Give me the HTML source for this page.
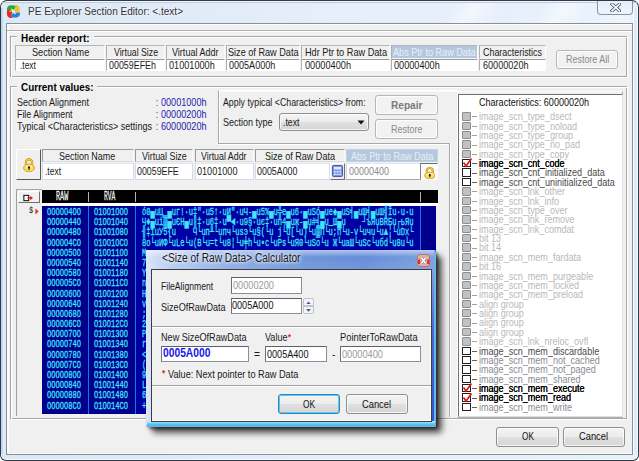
<!DOCTYPE html>
<html><head><meta charset="utf-8"><title>PE Explorer Section Editor</title>
<style>
html,body{margin:0;padding:0;background:#fff;overflow:hidden}
body{width:639px;height:461px;position:relative;font-family:"Liberation Sans",sans-serif}
div,span.t,svg{position:absolute;box-sizing:border-box}
span.t{white-space:pre;transform-origin:0 0;display:block}

.btn{border:1px solid #8e8f8f;border-radius:3px;background:linear-gradient(#f4f4f4 0%,#ececec 48%,#dfdfdf 52%,#d6d6d6 100%);box-shadow:inset 0 0 0 1px rgba(255,255,255,.75)}
.btnd{border:1px solid #b4b7ba;border-radius:3px;background:#f2f2f2;box-shadow:inset 0 0 0 1px rgba(255,255,255,.8)}
.hc{background:#f0f0f0;border-top:1px solid #b6b6b6;border-left:1px solid #b0b0b0;border-bottom:1px solid #f6f6f6;border-right:1px solid #fcfcfc}
.dc{background:#fff;border-top:1px solid #9a9a9a;border-left:1px solid #b0b0b0;border-bottom:1px solid #fff;border-right:1px solid #fff}
.hc2{background:#f0f0f0;border-top:1px solid #989898;border-left:1px solid #989898;border-right:1px solid #fafafa;border-bottom:1px solid #dcdcdc}
.dc2{background:#fff;border:1px solid #d3daec;border-top-color:#e2e6f0}
.fld{background:#fff;border:1px solid #8a8e96;border-top-color:#5c6068;border-left-color:#6c7078}

</style></head><body>
<div style="left:0px;top:0px;width:639px;height:461px;border-radius:7px 7px 6px 6px;background:#343a44"></div>
<div style="left:1px;top:1px;width:637px;height:459px;border-radius:6px 6px 5px 5px;background:#f2f8fd"></div>
<div style="left:2px;top:2px;width:635px;height:457px;border-radius:5px 5px 4px 4px;background:linear-gradient(to right,#dce8f5 0%,#e1eaf8 30%,#e6eefc 50%,#e8effc 78%,#e6f2fb 100%)"></div>
<div style="left:2px;top:2px;width:635px;height:1.2px;border-radius:5px 5px 0 0;background:#b9cce3"></div>
<div style="left:1px;top:8px;width:2.2px;height:446px;background:linear-gradient(to right,#bcd3ee,#cadef3)"></div>
<div style="left:3.2px;top:8px;width:2.8px;height:446px;background:#ddebfa"></div>
<div style="left:633px;top:8px;width:1px;height:446px;background:#fafdff"></div>
<div style="left:634px;top:8px;width:3px;height:446px;background:#dceafa"></div>
<div style="left:330px;top:3px;width:300px;height:20px;background:linear-gradient(125deg,rgba(255,255,255,0) 0%,rgba(255,255,255,0) 40%,rgba(255,255,255,.45) 47%,rgba(255,255,255,0) 56%,rgba(255,255,255,0) 68%,rgba(255,255,255,.5) 76%,rgba(255,255,255,.1) 84%,rgba(255,255,255,.35) 100%)"></div>
<svg style="left:6px;top:4px" width="15" height="15" viewBox="0 0 15 15">
<path d="M1 5 C1 1.5 4 0.5 7 1.5 L9.5 1.5 L9.5 4 L6 7 L3 6 L1 7 Z" fill="#2ea82e"/>
<path d="M9 1 C12 0.5 14.3 3 13.6 6 L13.5 9 L11 9.5 L8 6.5 L9.5 4 Z" fill="#ecc23a"/>
<path d="M14 8.5 C14.5 12 12 14 8.5 13.5 L5.5 13.5 L5 11 L8.5 8 L11 9 Z" fill="#2a7fd4"/>
<path d="M6 14 C3 14.5 0.5 12 1 9 L1 6.5 L3.5 5.5 L6.5 8.5 L5 11 Z" fill="#e02c1c"/>
<path d="M5.5 5 L9.5 10" stroke="#eaf2fb" stroke-width="1.3"/>
<circle cx="4.2" cy="7.2" r="0.8" fill="#f0d040"/>
</svg>
<span class="t" style="left:28.00px;top:5.81px;font-family:'Liberation Sans';font-size:10.5px;line-height:10.5px;font-weight:400;color:#343434;transform:scaleX(0.9553);text-shadow:0 0 3px #fff;">PE Explorer Section Editor: &lt;.text&gt;</span>
<div style="left:597px;top:1.2px;width:36px;height:13.6px;border:1px solid #8a96a6;border-top:none;border-radius:0 0 4px 4px;background:linear-gradient(#e6eef9,#eef4fc)"></div>
<svg style="left:609.5px;top:2.8px" width="11.5" height="9" viewBox="0 0 14 11"><path d="M2.5 1.5 L11.5 9.5 M11.5 1.5 L2.5 9.5" stroke="#4c5662" stroke-width="4" stroke-linecap="square"/><path d="M2.5 1.5 L11.5 9.5 M11.5 1.5 L2.5 9.5" stroke="#fafcff" stroke-width="2" stroke-linecap="square"/></svg>
<div style="left:6px;top:23px;width:627px;height:432px;background:#f0f0f0;border:1px solid #889096"></div>
<div style="left:7px;top:24px;width:625px;height:1px;background:#fdfdfd"></div>
<div style="left:7px;top:24px;width:2px;height:429px;background:#fdfdfd"></div>
<div style="left:7px;top:452.5px;width:625px;height:1px;background:#f8f8f8"></div>
<div style="left:7px;top:30px;width:625px;height:1px;background:#b0b0b0"></div>
<div style="left:7px;top:31px;width:625px;height:1px;background:#fff"></div>
<div style="left:10px;top:36px;width:617px;height:41px;border:1px solid #a8a8a8"></div>
<div style="left:11px;top:37px;width:617px;height:41px;border:1px solid #fff;border-right-color:#fff;"></div>
<div style="left:10px;top:36px;width:617px;height:41px;border:1px solid #a8a8a8;border-right:none;border-bottom:none;background:none"></div>
<div style="left:17px;top:32px;width:77px;height:10px;background:#f0f0f0"></div>
<span class="t" style="left:20.50px;top:32.59px;font-family:'Liberation Sans';font-size:11px;line-height:11px;font-weight:700;color:#000;transform:scaleX(0.9037);">Header report:</span>
<div class="hc" style="left:15px;top:45px;width:90px;height:14px;"></div>
<div class="dc" style="left:15px;top:59px;width:90px;height:12px"></div>
<span class="t" style="left:31.60px;top:46.99px;font-family:'Liberation Sans';font-size:11px;line-height:11px;font-weight:400;color:#1a1a1a;transform:scaleX(0.8293);">Section Name</span>
<span class="t" style="left:19.70px;top:60.19px;font-family:'Liberation Sans';font-size:11px;line-height:11px;font-weight:400;color:#1a1a1a;transform:scaleX(0.7597);">.text</span>
<div class="hc" style="left:106px;top:45px;width:58.5px;height:14px;"></div>
<div class="dc" style="left:106px;top:59px;width:58.5px;height:12px"></div>
<span class="t" style="left:113.50px;top:46.99px;font-family:'Liberation Sans';font-size:11px;line-height:11px;font-weight:400;color:#1a1a1a;transform:scaleX(0.7937);">Virtual Size</span>
<span class="t" style="left:109.25px;top:60.19px;font-family:'Liberation Sans';font-size:11px;line-height:11px;font-weight:400;color:#1a1a1a;transform:scaleX(0.8088);">00059EFEh</span>
<div class="hc" style="left:165.5px;top:45px;width:59.0px;height:14px;"></div>
<div class="dc" style="left:165.5px;top:59px;width:59.0px;height:12px"></div>
<span class="t" style="left:171.50px;top:46.99px;font-family:'Liberation Sans';font-size:11px;line-height:11px;font-weight:400;color:#1a1a1a;transform:scaleX(0.8205);">Virtual Addr</span>
<span class="t" style="left:168.75px;top:60.19px;font-family:'Liberation Sans';font-size:11px;line-height:11px;font-weight:400;color:#1a1a1a;transform:scaleX(0.8309);">01001000h</span>
<div class="hc" style="left:225.5px;top:45px;width:74.5px;height:14px;"></div>
<div class="dc" style="left:225.5px;top:59px;width:74.5px;height:12px"></div>
<span class="t" style="left:227.50px;top:46.99px;font-family:'Liberation Sans';font-size:11px;line-height:11px;font-weight:400;color:#1a1a1a;transform:scaleX(0.8296);">Size of Raw Data</span>
<span class="t" style="left:228.75px;top:60.19px;font-family:'Liberation Sans';font-size:11px;line-height:11px;font-weight:400;color:#1a1a1a;transform:scaleX(0.8218);">0005A000h</span>
<div class="hc" style="left:301px;top:45px;width:88.5px;height:14px;"></div>
<div class="dc" style="left:301px;top:59px;width:88.5px;height:12px"></div>
<span class="t" style="left:305.00px;top:46.99px;font-family:'Liberation Sans';font-size:11px;line-height:11px;font-weight:400;color:#1a1a1a;transform:scaleX(0.8331);">Hdr Ptr to Raw Data</span>
<span class="t" style="left:304.50px;top:60.19px;font-family:'Liberation Sans';font-size:11px;line-height:11px;font-weight:400;color:#1a1a1a;transform:scaleX(0.8354);">00000400h</span>
<div class="hc" style="left:390.5px;top:45px;width:87.5px;height:14px;background:#b5c7de;"></div>
<div class="dc" style="left:390.5px;top:59px;width:87.5px;height:12px"></div>
<span class="t" style="left:392.50px;top:46.99px;font-family:'Liberation Sans';font-size:11px;line-height:11px;font-weight:400;color:#e9eef6;transform:scaleX(0.8278);">Abs Ptr to Raw Data</span>
<span class="t" style="left:393.75px;top:60.19px;font-family:'Liberation Sans';font-size:11px;line-height:11px;font-weight:400;color:#1a1a1a;transform:scaleX(0.8309);">00000400h</span>
<div class="hc" style="left:479px;top:45px;width:67px;height:14px;"></div>
<div class="dc" style="left:479px;top:59px;width:67px;height:12px"></div>
<span class="t" style="left:483.00px;top:46.99px;font-family:'Liberation Sans';font-size:11px;line-height:11px;font-weight:400;color:#1a1a1a;transform:scaleX(0.8110);">Characteristics</span>
<span class="t" style="left:482.50px;top:60.19px;font-family:'Liberation Sans';font-size:11px;line-height:11px;font-weight:400;color:#1a1a1a;transform:scaleX(0.8263);">60000020h</span>
<div class="btnd" style="left:556px;top:49.5px;width:62px;height:19.5px"></div>
<span class="t" style="left:566.25px;top:54.29px;font-family:'Liberation Sans';font-size:11px;line-height:11px;font-weight:400;color:#8a8a8a;transform:scaleX(0.8129);">Restore All</span>
<div style="left:10px;top:86px;width:617px;height:333px;border:1px solid #a8a8a8"></div>
<div style="left:11px;top:87px;width:617px;height:333px;border:1px solid #fff;border-right-color:#fff;"></div>
<div style="left:10px;top:86px;width:617px;height:333px;border:1px solid #a8a8a8;border-right:none;border-bottom:none;background:none"></div>
<div style="left:17px;top:82px;width:80px;height:10px;background:#f0f0f0"></div>
<span class="t" style="left:20.50px;top:81.69px;font-family:'Liberation Sans';font-size:11px;line-height:11px;font-weight:700;color:#000;transform:scaleX(0.8984);">Current values:</span>
<span class="t" style="left:17.00px;top:96.69px;font-family:'Liberation Sans';font-size:11px;line-height:11px;font-weight:400;color:#1a1a1a;transform:scaleX(0.8176);">Section Alignment</span>
<span class="t" style="left:17.00px;top:108.99px;font-family:'Liberation Sans';font-size:11px;line-height:11px;font-weight:400;color:#1a1a1a;transform:scaleX(0.8033);">File Alignment</span>
<span class="t" style="left:17.00px;top:120.59px;font-family:'Liberation Sans';font-size:11px;line-height:11px;font-weight:400;color:#1a1a1a;transform:scaleX(0.8239);">Typical &lt;Characteristics&gt; settings</span>
<span class="t" style="left:155.50px;top:96.69px;font-family:'Liberation Sans';font-size:11px;line-height:11px;font-weight:400;color:#1a1a1a;transform:scaleX(0.6531);">:</span>
<span class="t" style="left:161.00px;top:96.69px;font-family:'Liberation Sans';font-size:11px;line-height:11px;font-weight:400;color:#1c1ca8;transform:scaleX(0.8263);">00001000h</span>
<span class="t" style="left:155.50px;top:108.99px;font-family:'Liberation Sans';font-size:11px;line-height:11px;font-weight:400;color:#1a1a1a;transform:scaleX(0.6531);">:</span>
<span class="t" style="left:161.00px;top:108.99px;font-family:'Liberation Sans';font-size:11px;line-height:11px;font-weight:400;color:#1c1ca8;transform:scaleX(0.8263);">00000200h</span>
<span class="t" style="left:155.50px;top:120.59px;font-family:'Liberation Sans';font-size:11px;line-height:11px;font-weight:400;color:#1a1a1a;transform:scaleX(0.6531);">:</span>
<span class="t" style="left:161.00px;top:120.59px;font-family:'Liberation Sans';font-size:11px;line-height:11px;font-weight:400;color:#1c1ca8;transform:scaleX(0.8263);">60000020h</span>
<div style="left:218px;top:90px;width:240px;height:54px;border-top:1px solid #fff;border-left:1px solid #a8a8a8"></div>
<div style="left:219px;top:91px;width:239px;height:53px;border-top:1px solid #f8f8f8;border-left:1px solid #fff"></div>
<div style="left:218px;top:143px;width:232px;height:1px;background:#a8a8a8"></div>
<div style="left:218px;top:144px;width:232px;height:1px;background:#fff"></div>
<div style="left:449px;top:143px;width:1px;height:274px;background:#a8a8a8"></div>
<div style="left:450px;top:143px;width:1px;height:274px;background:#fff"></div>
<span class="t" style="left:223.40px;top:96.59px;font-family:'Liberation Sans';font-size:11px;line-height:11px;font-weight:400;color:#1a1a1a;transform:scaleX(0.7988);">Apply typical &lt;Characteristics&gt; from:</span>
<span class="t" style="left:223.40px;top:116.59px;font-family:'Liberation Sans';font-size:11px;line-height:11px;font-weight:400;color:#1a1a1a;transform:scaleX(0.8192);">Section type</span>
<div class="btn" style="left:279px;top:113px;width:90px;height:18px"></div>
<span class="t" style="left:283.00px;top:116.59px;font-family:'Liberation Sans';font-size:11px;line-height:11px;font-weight:400;color:#1a1a1a;transform:scaleX(0.7934);">.text</span>
<svg style="left:357px;top:120px" width="8" height="5" viewBox="0 0 8 5"><path d="M0.5 0.5 L7.5 0.5 L4 4.5 Z" fill="#111"/></svg>
<div class="btnd" style="left:375px;top:95px;width:63px;height:20px"></div>
<span class="t" style="left:390.50px;top:100.19px;font-family:'Liberation Sans';font-size:11px;line-height:11px;font-weight:700;color:#7c7c7c;transform:scaleX(0.9197);">Repair</span>
<div class="btnd" style="left:375px;top:119px;width:63px;height:20px"></div>
<span class="t" style="left:391.00px;top:123.69px;font-family:'Liberation Sans';font-size:11px;line-height:11px;font-weight:400;color:#8a8a8a;transform:scaleX(0.8175);">Restore</span>
<div style="left:16px;top:149.3px;width:25px;height:30.7px;background:#f0f0f0;border:1px solid #fff;border-right:1.4px solid #585858;border-bottom:1.4px solid #585858"></div>
<svg style="left:22.5px;top:158px" width="12" height="14" viewBox="0 0 12 14">
<path d="M3 7 V4.2 a3 3 0 0 1 6 0 V7" fill="none" stroke="#d89a18" stroke-width="2.4"/>
<path d="M3 7 V4.2 a3 3 0 0 1 6 0 V7" fill="none" stroke="#f4cf58" stroke-width="1"/>
<ellipse cx="6" cy="10" rx="5.4" ry="3.9" fill="#f6dc62" stroke="#d8a218" stroke-width="1"/>
<ellipse cx="6" cy="8.6" rx="3.6" ry="1.3" fill="#fdf0a8"/>
<circle cx="6" cy="9.3" r="1.1" fill="#1a1400"/><rect x="5.5" y="9.3" width="1" height="2.8" fill="#1a1400"/>
</svg>
<div class="hc2" style="left:41.5px;top:149.3px;width:92.0px;height:13.2px;"></div>
<div class="dc2" style="left:41.5px;top:162.5px;width:92.0px;height:17.5px"></div>
<span class="t" style="left:59.25px;top:150.99px;font-family:'Liberation Sans';font-size:11px;line-height:11px;font-weight:400;color:#1a1a1a;transform:scaleX(0.8141);">Section Name</span>
<span class="t" style="left:44.50px;top:165.69px;font-family:'Liberation Sans';font-size:11px;line-height:11px;font-weight:400;color:#1a1a1a;transform:scaleX(0.7693);">.text</span>
<div class="hc2" style="left:134.5px;top:149.3px;width:58.5px;height:13.2px;"></div>
<div class="dc2" style="left:134.5px;top:162.5px;width:58.5px;height:17.5px"></div>
<span class="t" style="left:141.50px;top:150.99px;font-family:'Liberation Sans';font-size:11px;line-height:11px;font-weight:400;color:#1a1a1a;transform:scaleX(0.8072);">Virtual Size</span>
<span class="t" style="left:137.00px;top:165.69px;font-family:'Liberation Sans';font-size:11px;line-height:11px;font-weight:400;color:#1a1a1a;transform:scaleX(0.8031);">00059EFE</span>
<div class="hc2" style="left:194.5px;top:149.3px;width:59.0px;height:13.2px;"></div>
<div class="dc2" style="left:194.5px;top:162.5px;width:59.0px;height:17.5px"></div>
<span class="t" style="left:201.25px;top:150.99px;font-family:'Liberation Sans';font-size:11px;line-height:11px;font-weight:400;color:#1a1a1a;transform:scaleX(0.8029);">Virtual Addr</span>
<span class="t" style="left:197.00px;top:165.69px;font-family:'Liberation Sans';font-size:11px;line-height:11px;font-weight:400;color:#1a1a1a;transform:scaleX(0.8273);">01001000</span>
<div class="hc2" style="left:254.5px;top:149.3px;width:90.5px;height:13.2px;"></div>
<div class="dc2" style="left:254.5px;top:162.5px;width:75.0px;height:17.5px"></div>
<span class="t" style="left:264.50px;top:150.99px;font-family:'Liberation Sans';font-size:11px;line-height:11px;font-weight:400;color:#1a1a1a;transform:scaleX(0.8237);">Size of Raw Data</span>
<span class="t" style="left:257.00px;top:165.69px;font-family:'Liberation Sans';font-size:11px;line-height:11px;font-weight:400;color:#1a1a1a;transform:scaleX(0.8072);">0005A000</span>
<div class="hc2" style="left:346px;top:149.3px;width:91.5px;height:13.2px;background:#b5c7de;border-color:#c4d2e6;"></div>
<div class="dc2" style="left:346px;top:162.5px;width:74.5px;height:17.5px"></div>
<span class="t" style="left:350.75px;top:150.99px;font-family:'Liberation Sans';font-size:11px;line-height:11px;font-weight:400;color:#e9eef6;transform:scaleX(0.8253);">Abs Ptr to Raw Data</span>
<span class="t" style="left:348.75px;top:165.69px;font-family:'Liberation Sans';font-size:11px;line-height:11px;font-weight:400;color:#8c8c8c;transform:scaleX(0.8171);">00000400</span>
<div style="left:329.5px;top:163px;width:15.5px;height:16.5px;background:#ececec;border:1px solid #fff;border-right-color:#707070;border-bottom-color:#707070"></div>
<svg style="left:332px;top:165px" width="11" height="12" viewBox="0 0 11 12"><rect x="0.5" y="0.5" width="10" height="11" rx="1" fill="#7e96e4" stroke="#4a5cb0"/><rect x="2" y="2" width="7" height="2.5" fill="#dfe8ff"/><g fill="#e8eeff"><rect x="2" y="6" width="1.6" height="1.4"/><rect x="4.7" y="6" width="1.6" height="1.4"/><rect x="7.4" y="6" width="1.6" height="1.4"/><rect x="2" y="8.6" width="1.6" height="1.4"/><rect x="4.7" y="8.6" width="1.6" height="1.4"/><rect x="7.4" y="8.6" width="1.6" height="1.4"/></g></svg>
<div style="left:420px;top:163px;width:17.5px;height:17px;background:#fbfbfb;border:1px solid #fbfbfb;border-top:1.3px solid #707070;border-left:1.3px solid #808080"></div>
<svg style="left:423.8px;top:166.6px" width="11.6" height="12" preserveAspectRatio="none" viewBox="0 0 12 14">
<path d="M3 7 V4.2 a3 3 0 0 1 6 0 V7" fill="none" stroke="#d89a18" stroke-width="2.4"/>
<path d="M3 7 V4.2 a3 3 0 0 1 6 0 V7" fill="none" stroke="#f4cf58" stroke-width="1"/>
<ellipse cx="6" cy="10" rx="5.4" ry="3.9" fill="#f6dc62" stroke="#d8a218" stroke-width="1"/>
<ellipse cx="6" cy="8.6" rx="3.6" ry="1.3" fill="#fdf0a8"/>
<circle cx="6" cy="9.3" r="1.1" fill="#1a1400"/><rect x="5.5" y="9.3" width="1" height="2.8" fill="#1a1400"/>
</svg>
<div style="left:346px;top:178.8px;width:75px;height:1px;background:#a8a8a8"></div>
<div style="left:16px;top:190px;width:1px;height:226px;background:#a0a0a0"></div>
<div style="left:16px;top:189.3px;width:26px;height:1px;background:#a8a8a8"></div>
<div style="left:18px;top:190.8px;width:21.6px;height:12.6px;background:#f0f0f0;border:1px solid #fff;border-right:1.3px solid #707070;border-bottom:1.3px solid #707070"></div>
<svg style="left:23.3px;top:193.8px" width="10.5" height="8" viewBox="0 0 12 9"><rect x="1" y="1.5" width="5.5" height="6" fill="#fff" stroke="#111" stroke-width="1.2"/><path d="M5 4.5 H10" stroke="#e02010" stroke-width="1.6"/><path d="M8.2 2 L11.5 4.5 L8.2 7 Z" fill="#e02010"/></svg>
<div style="left:41.5px;top:189.5px;width:396.5px;height:14px;background:#000"></div>
<div style="left:41.5px;top:203.3px;width:396.5px;height:2.8px;background:#fff"></div>
<div style="left:42.3px;top:206px;width:394.2px;height:208.2px;background:#00008c"></div>
<div style="left:136px;top:206px;width:284px;height:208.2px;background:#0000a2"></div>
<div style="left:87.5px;top:192px;width:1.4px;height:10px;background:#b0b0b0"></div>
<div style="left:87.5px;top:206px;width:1.3px;height:208px;background:#1878d8"></div>
<div style="left:134.5px;top:192px;width:1.4px;height:10px;background:#b0b0b0"></div>
<div style="left:134.5px;top:206px;width:1.3px;height:208px;background:#1878d8"></div>
<div style="left:419.5px;top:192px;width:1.4px;height:10px;background:#b0b0b0"></div>
<div style="left:419.5px;top:206px;width:1.3px;height:208px;background:#1878d8"></div>
<span class="t" style="left:56.00px;top:191.14px;font-family:'Liberation Mono';font-size:12px;line-height:12px;font-weight:400;color:#f4f4f4;transform:scaleX(0.5646);-webkit-text-stroke:.3px #f4f4f4;">RAW</span>
<span class="t" style="left:103.60px;top:191.14px;font-family:'Liberation Mono';font-size:12px;line-height:12px;font-weight:400;color:#f4f4f4;transform:scaleX(0.5275);-webkit-text-stroke:.3px #f4f4f4;">RVA</span>
<span class="t" style="left:28.80px;top:206.58px;font-family:'Liberation Mono';font-size:9px;line-height:9px;font-weight:400;color:#202020;transform:scaleX(0.7769);">$</span>
<svg style="left:34.8px;top:208px" width="4.2" height="7" viewBox="0 0 5 9"><path d="M0.3 0.5 L4.5 4.5 L0.3 8.5 Z" fill="#e03010"/></svg>
<span class="t" style="left:47.40px;top:206.07px;font-family:'Liberation Mono';font-size:11.5px;line-height:11.5px;font-weight:400;color:#40e6ff;transform:scaleX(0.6139);-webkit-text-stroke:.3px #40e6ff;">OOOOO4OO</span>
<span class="t" style="left:93.70px;top:206.07px;font-family:'Liberation Mono';font-size:11.5px;line-height:11.5px;font-weight:400;color:#40e6ff;transform:scaleX(0.6139);-webkit-text-stroke:.3px #40e6ff;">O1OO1OOO</span>
<span class="t" style="left:142.00px;top:206.07px;font-family:'Liberation Mono';font-size:11.5px;line-height:11.5px;font-weight:400;color:#40e6ff;transform:scaleX(0.6147);-webkit-text-stroke:.3px #40e6ff;">ó0▄uЦ ▄uг!·u‡&quot;·u5↑·uИ&quot;·uЧ-▄u5%▄u╬e▄u6·▄uSó▄ue♠▄uS╡▄uШ╡▄uШ╣Їu·u·u</span>
<span class="t" style="left:47.40px;top:216.25px;font-family:'Liberation Mono';font-size:11.5px;line-height:11.5px;font-weight:400;color:#40e6ff;transform:scaleX(0.6139);-webkit-text-stroke:.3px #40e6ff;">OOOOO44O</span>
<span class="t" style="left:93.70px;top:216.25px;font-family:'Liberation Mono';font-size:11.5px;line-height:11.5px;font-weight:400;color:#40e6ff;transform:scaleX(0.6139);-webkit-text-stroke:.3px #40e6ff;">O1OO1O4O</span>
<span class="t" style="left:142.00px;top:216.25px;font-family:'Liberation Mono';font-size:11.5px;line-height:11.5px;font-weight:400;color:#40e6ff;transform:scaleX(0.6147);-webkit-text-stroke:.3px #40e6ff;">Ч♦▄ui▒▄uЄH▄u║‡·u6‡·u▀◄·u9§·uє‡·uп4▄uж-▄u#╡▄u_Ш▄u    ┘ъЯuBRБu┌ьЯu</span>
<span class="t" style="left:47.40px;top:226.44px;font-family:'Liberation Mono';font-size:11.5px;line-height:11.5px;font-weight:400;color:#40e6ff;transform:scaleX(0.6139);-webkit-text-stroke:.3px #40e6ff;">OOOOO48O</span>
<span class="t" style="left:93.70px;top:226.44px;font-family:'Liberation Mono';font-size:11.5px;line-height:11.5px;font-weight:400;color:#40e6ff;transform:scaleX(0.6139);-webkit-text-stroke:.3px #40e6ff;">O1OO1O8O</span>
<span class="t" style="left:142.00px;top:226.44px;font-family:'Liberation Mono';font-size:11.5px;line-height:11.5px;font-weight:400;color:#40e6ff;transform:scaleX(0.6146);-webkit-text-stroke:.3px #40e6ff;">╢‡їuУ5{u    Ч└uп╨└uпч└usэ└u§(└u j└u[└u)└u▒П└u;п└u-v└uчu└u▲╎└uDx└</span>
<span class="t" style="left:47.40px;top:236.62px;font-family:'Liberation Mono';font-size:11.5px;line-height:11.5px;font-weight:400;color:#40e6ff;transform:scaleX(0.6139);-webkit-text-stroke:.3px #40e6ff;">OOOOO4CO</span>
<span class="t" style="left:93.70px;top:236.62px;font-family:'Liberation Mono';font-size:11.5px;line-height:11.5px;font-weight:400;color:#40e6ff;transform:scaleX(0.6139);-webkit-text-stroke:.3px #40e6ff;">O1OO1OCO</span>
<span class="t" style="left:142.00px;top:236.62px;font-family:'Liberation Mono';font-size:11.5px;line-height:11.5px;font-weight:400;color:#40e6ff;transform:scaleX(0.6147);-webkit-text-stroke:.3px #40e6ff;">8o└uИФ└uLe└u(В└u=t└u8¦└u╪h└u▪с└uРs└uЯ0└uSo└u Ж└uаШ└uSc└uбd└u8u└u</span>
<span class="t" style="left:47.40px;top:246.81px;font-family:'Liberation Mono';font-size:11.5px;line-height:11.5px;font-weight:400;color:#40e6ff;transform:scaleX(0.6139);-webkit-text-stroke:.3px #40e6ff;">OOOOO5OO</span>
<span class="t" style="left:93.70px;top:246.81px;font-family:'Liberation Mono';font-size:11.5px;line-height:11.5px;font-weight:400;color:#40e6ff;transform:scaleX(0.6139);-webkit-text-stroke:.3px #40e6ff;">O1OO11OO</span>
<span class="t" style="left:142.00px;top:246.81px;font-family:'Liberation Mono';font-size:11.5px;line-height:11.5px;font-weight:400;color:#40e6ff;transform:scaleX(0.6147);-webkit-text-stroke:.3px #40e6ff;">M                                                               </span>
<span class="t" style="left:47.40px;top:256.99px;font-family:'Liberation Mono';font-size:11.5px;line-height:11.5px;font-weight:400;color:#40e6ff;transform:scaleX(0.6139);-webkit-text-stroke:.3px #40e6ff;">OOOOO54O</span>
<span class="t" style="left:93.70px;top:256.99px;font-family:'Liberation Mono';font-size:11.5px;line-height:11.5px;font-weight:400;color:#40e6ff;transform:scaleX(0.6139);-webkit-text-stroke:.3px #40e6ff;">O1OO114O</span>
<span class="t" style="left:142.00px;top:256.99px;font-family:'Liberation Mono';font-size:11.5px;line-height:11.5px;font-weight:400;color:#40e6ff;transform:scaleX(0.6147);-webkit-text-stroke:.3px #40e6ff;">7                                                               </span>
<span class="t" style="left:47.40px;top:267.18px;font-family:'Liberation Mono';font-size:11.5px;line-height:11.5px;font-weight:400;color:#40e6ff;transform:scaleX(0.6139);-webkit-text-stroke:.3px #40e6ff;">OOOOO58O</span>
<span class="t" style="left:93.70px;top:267.18px;font-family:'Liberation Mono';font-size:11.5px;line-height:11.5px;font-weight:400;color:#40e6ff;transform:scaleX(0.6139);-webkit-text-stroke:.3px #40e6ff;">O1OO118O</span>
<span class="t" style="left:142.00px;top:267.18px;font-family:'Liberation Mono';font-size:11.5px;line-height:11.5px;font-weight:400;color:#40e6ff;transform:scaleX(0.6147);-webkit-text-stroke:.3px #40e6ff;">Y                                                               </span>
<span class="t" style="left:47.40px;top:277.36px;font-family:'Liberation Mono';font-size:11.5px;line-height:11.5px;font-weight:400;color:#40e6ff;transform:scaleX(0.6139);-webkit-text-stroke:.3px #40e6ff;">OOOOO5CO</span>
<span class="t" style="left:93.70px;top:277.36px;font-family:'Liberation Mono';font-size:11.5px;line-height:11.5px;font-weight:400;color:#40e6ff;transform:scaleX(0.6139);-webkit-text-stroke:.3px #40e6ff;">O1OO11CO</span>
<span class="t" style="left:142.00px;top:277.36px;font-family:'Liberation Mono';font-size:11.5px;line-height:11.5px;font-weight:400;color:#40e6ff;transform:scaleX(0.6147);-webkit-text-stroke:.3px #40e6ff;">n                                                               </span>
<span class="t" style="left:47.40px;top:287.55px;font-family:'Liberation Mono';font-size:11.5px;line-height:11.5px;font-weight:400;color:#40e6ff;transform:scaleX(0.6139);-webkit-text-stroke:.3px #40e6ff;">OOOOO6OO</span>
<span class="t" style="left:93.70px;top:287.55px;font-family:'Liberation Mono';font-size:11.5px;line-height:11.5px;font-weight:400;color:#40e6ff;transform:scaleX(0.6139);-webkit-text-stroke:.3px #40e6ff;">O1OO12OO</span>
<span class="t" style="left:142.00px;top:287.55px;font-family:'Liberation Mono';font-size:11.5px;line-height:11.5px;font-weight:400;color:#40e6ff;transform:scaleX(0.6147);-webkit-text-stroke:.3px #40e6ff;">H                                                               </span>
<span class="t" style="left:47.40px;top:297.73px;font-family:'Liberation Mono';font-size:11.5px;line-height:11.5px;font-weight:400;color:#40e6ff;transform:scaleX(0.6139);-webkit-text-stroke:.3px #40e6ff;">OOOOO64O</span>
<span class="t" style="left:93.70px;top:297.73px;font-family:'Liberation Mono';font-size:11.5px;line-height:11.5px;font-weight:400;color:#40e6ff;transform:scaleX(0.6139);-webkit-text-stroke:.3px #40e6ff;">O1OO124O</span>
<span class="t" style="left:142.00px;top:297.73px;font-family:'Liberation Mono';font-size:11.5px;line-height:11.5px;font-weight:400;color:#40e6ff;transform:scaleX(0.6147);-webkit-text-stroke:.3px #40e6ff;">v                                                               </span>
<span class="t" style="left:47.40px;top:307.92px;font-family:'Liberation Mono';font-size:11.5px;line-height:11.5px;font-weight:400;color:#40e6ff;transform:scaleX(0.6139);-webkit-text-stroke:.3px #40e6ff;">OOOOO68O</span>
<span class="t" style="left:93.70px;top:307.92px;font-family:'Liberation Mono';font-size:11.5px;line-height:11.5px;font-weight:400;color:#40e6ff;transform:scaleX(0.6139);-webkit-text-stroke:.3px #40e6ff;">O1OO128O</span>
<span class="t" style="left:142.00px;top:307.92px;font-family:'Liberation Mono';font-size:11.5px;line-height:11.5px;font-weight:400;color:#40e6ff;transform:scaleX(0.6147);-webkit-text-stroke:.3px #40e6ff;">;                                                               </span>
<span class="t" style="left:47.40px;top:318.10px;font-family:'Liberation Mono';font-size:11.5px;line-height:11.5px;font-weight:400;color:#40e6ff;transform:scaleX(0.6139);-webkit-text-stroke:.3px #40e6ff;">OOOOO6CO</span>
<span class="t" style="left:93.70px;top:318.10px;font-family:'Liberation Mono';font-size:11.5px;line-height:11.5px;font-weight:400;color:#40e6ff;transform:scaleX(0.6139);-webkit-text-stroke:.3px #40e6ff;">O1OO12CO</span>
<span class="t" style="left:142.00px;top:318.10px;font-family:'Liberation Mono';font-size:11.5px;line-height:11.5px;font-weight:400;color:#40e6ff;transform:scaleX(0.6147);-webkit-text-stroke:.3px #40e6ff;">2                                                               </span>
<span class="t" style="left:47.40px;top:328.29px;font-family:'Liberation Mono';font-size:11.5px;line-height:11.5px;font-weight:400;color:#40e6ff;transform:scaleX(0.6139);-webkit-text-stroke:.3px #40e6ff;">OOOOO7OO</span>
<span class="t" style="left:93.70px;top:328.29px;font-family:'Liberation Mono';font-size:11.5px;line-height:11.5px;font-weight:400;color:#40e6ff;transform:scaleX(0.6139);-webkit-text-stroke:.3px #40e6ff;">O1OO13OO</span>
<span class="t" style="left:142.00px;top:328.29px;font-family:'Liberation Mono';font-size:11.5px;line-height:11.5px;font-weight:400;color:#40e6ff;transform:scaleX(0.6147);-webkit-text-stroke:.3px #40e6ff;">P                                                               </span>
<span class="t" style="left:47.40px;top:338.47px;font-family:'Liberation Mono';font-size:11.5px;line-height:11.5px;font-weight:400;color:#40e6ff;transform:scaleX(0.6139);-webkit-text-stroke:.3px #40e6ff;">OOOOO74O</span>
<span class="t" style="left:93.70px;top:338.47px;font-family:'Liberation Mono';font-size:11.5px;line-height:11.5px;font-weight:400;color:#40e6ff;transform:scaleX(0.6139);-webkit-text-stroke:.3px #40e6ff;">O1OO134O</span>
<span class="t" style="left:142.00px;top:338.47px;font-family:'Liberation Mono';font-size:11.5px;line-height:11.5px;font-weight:400;color:#40e6ff;transform:scaleX(0.6147);-webkit-text-stroke:.3px #40e6ff;">r                                                               </span>
<span class="t" style="left:47.40px;top:348.66px;font-family:'Liberation Mono';font-size:11.5px;line-height:11.5px;font-weight:400;color:#40e6ff;transform:scaleX(0.6139);-webkit-text-stroke:.3px #40e6ff;">OOOOO78O</span>
<span class="t" style="left:93.70px;top:348.66px;font-family:'Liberation Mono';font-size:11.5px;line-height:11.5px;font-weight:400;color:#40e6ff;transform:scaleX(0.6139);-webkit-text-stroke:.3px #40e6ff;">O1OO138O</span>
<span class="t" style="left:142.00px;top:348.66px;font-family:'Liberation Mono';font-size:11.5px;line-height:11.5px;font-weight:400;color:#40e6ff;transform:scaleX(0.6147);-webkit-text-stroke:.3px #40e6ff;">&lt;                                                               </span>
<span class="t" style="left:47.40px;top:358.84px;font-family:'Liberation Mono';font-size:11.5px;line-height:11.5px;font-weight:400;color:#40e6ff;transform:scaleX(0.6139);-webkit-text-stroke:.3px #40e6ff;">OOOOO7CO</span>
<span class="t" style="left:93.70px;top:358.84px;font-family:'Liberation Mono';font-size:11.5px;line-height:11.5px;font-weight:400;color:#40e6ff;transform:scaleX(0.6139);-webkit-text-stroke:.3px #40e6ff;">O1OO13CO</span>
<span class="t" style="left:142.00px;top:358.84px;font-family:'Liberation Mono';font-size:11.5px;line-height:11.5px;font-weight:400;color:#40e6ff;transform:scaleX(0.6147);-webkit-text-stroke:.3px #40e6ff;">(                                                               </span>
<span class="t" style="left:47.40px;top:369.03px;font-family:'Liberation Mono';font-size:11.5px;line-height:11.5px;font-weight:400;color:#40e6ff;transform:scaleX(0.6139);-webkit-text-stroke:.3px #40e6ff;">OOOOO8OO</span>
<span class="t" style="left:93.70px;top:369.03px;font-family:'Liberation Mono';font-size:11.5px;line-height:11.5px;font-weight:400;color:#40e6ff;transform:scaleX(0.6139);-webkit-text-stroke:.3px #40e6ff;">O1OO14OO</span>
<span class="t" style="left:142.00px;top:369.03px;font-family:'Liberation Mono';font-size:11.5px;line-height:11.5px;font-weight:400;color:#40e6ff;transform:scaleX(0.6147);-webkit-text-stroke:.3px #40e6ff;">9                                                               </span>
<span class="t" style="left:47.40px;top:379.21px;font-family:'Liberation Mono';font-size:11.5px;line-height:11.5px;font-weight:400;color:#40e6ff;transform:scaleX(0.6139);-webkit-text-stroke:.3px #40e6ff;">OOOOO84O</span>
<span class="t" style="left:93.70px;top:379.21px;font-family:'Liberation Mono';font-size:11.5px;line-height:11.5px;font-weight:400;color:#40e6ff;transform:scaleX(0.6139);-webkit-text-stroke:.3px #40e6ff;">O1OO144O</span>
<span class="t" style="left:142.00px;top:379.21px;font-family:'Liberation Mono';font-size:11.5px;line-height:11.5px;font-weight:400;color:#40e6ff;transform:scaleX(0.6147);-webkit-text-stroke:.3px #40e6ff;">L                                                               </span>
<span class="t" style="left:47.40px;top:389.40px;font-family:'Liberation Mono';font-size:11.5px;line-height:11.5px;font-weight:400;color:#40e6ff;transform:scaleX(0.6139);-webkit-text-stroke:.3px #40e6ff;">OOOOO88O</span>
<span class="t" style="left:93.70px;top:389.40px;font-family:'Liberation Mono';font-size:11.5px;line-height:11.5px;font-weight:400;color:#40e6ff;transform:scaleX(0.6139);-webkit-text-stroke:.3px #40e6ff;">O1OO148O</span>
<span class="t" style="left:142.00px;top:389.40px;font-family:'Liberation Mono';font-size:11.5px;line-height:11.5px;font-weight:400;color:#40e6ff;transform:scaleX(0.6147);-webkit-text-stroke:.3px #40e6ff;">6                                                               </span>
<span class="t" style="left:47.40px;top:399.58px;font-family:'Liberation Mono';font-size:11.5px;line-height:11.5px;font-weight:400;color:#40e6ff;transform:scaleX(0.6139);-webkit-text-stroke:.3px #40e6ff;">OOOOO8CO</span>
<span class="t" style="left:93.70px;top:399.58px;font-family:'Liberation Mono';font-size:11.5px;line-height:11.5px;font-weight:400;color:#40e6ff;transform:scaleX(0.6139);-webkit-text-stroke:.3px #40e6ff;">O1OO14CO</span>
<span class="t" style="left:142.00px;top:399.58px;font-family:'Liberation Mono';font-size:11.5px;line-height:11.5px;font-weight:400;color:#40e6ff;transform:scaleX(0.6147);-webkit-text-stroke:.3px #40e6ff;">+                                                               </span>
<div style="left:457px;top:91px;width:166px;height:327px;border:1px solid #fff;border-right-color:#b0b0b0;border-bottom-color:#b0b0b0"></div>
<div style="left:458px;top:94px;width:164.5px;height:322.5px;background:#fff;border:1px solid #707070;border-right-color:#e0e0e0;border-bottom-color:#e0e0e0"></div>
<span class="t" style="left:479.30px;top:96.79px;font-family:'Liberation Sans';font-size:11px;line-height:11px;font-weight:400;color:#101010;transform:scaleX(0.8221);">Characteristics: 60000020h</span>
<div style="left:462px;top:112.2px;width:8.8px;height:8.4px;background:#c2c2c2;border:1px solid #8e8e8e;border-radius:1px"></div>
<div style="left:472.3px;top:116.4px;width:5.2px;height:1.1px;background:#a0a0a0"></div>
<span class="t" style="left:478.8px;top:112.23px;font-size:10px;line-height:10px;transform:scaleX(.905);color:#b9b9b9;">image_scn_type_dsect</span>
<div style="left:462px;top:121.575px;width:8.8px;height:8.4px;background:#c2c2c2;border:1px solid #8e8e8e;border-radius:1px"></div>
<div style="left:472.3px;top:125.775px;width:5.2px;height:1.1px;background:#a0a0a0"></div>
<span class="t" style="left:478.8px;top:121.61px;font-size:10px;line-height:10px;transform:scaleX(.905);color:#b9b9b9;">image_scn_type_noload</span>
<div style="left:462px;top:130.95000000000002px;width:8.8px;height:8.4px;background:#c2c2c2;border:1px solid #8e8e8e;border-radius:1px"></div>
<div style="left:472.3px;top:135.15px;width:5.2px;height:1.1px;background:#a0a0a0"></div>
<span class="t" style="left:478.8px;top:130.99px;font-size:10px;line-height:10px;transform:scaleX(.905);color:#b9b9b9;">image_scn_type_group</span>
<div style="left:462px;top:140.32500000000002px;width:8.8px;height:8.4px;background:#c2c2c2;border:1px solid #8e8e8e;border-radius:1px"></div>
<div style="left:472.3px;top:144.525px;width:5.2px;height:1.1px;background:#a0a0a0"></div>
<span class="t" style="left:478.8px;top:140.36px;font-size:10px;line-height:10px;transform:scaleX(.905);color:#b9b9b9;">image_scn_type_no_pad</span>
<div style="left:462px;top:149.70000000000002px;width:8.8px;height:8.4px;background:#c2c2c2;border:1px solid #8e8e8e;border-radius:1px"></div>
<div style="left:472.3px;top:153.9px;width:5.2px;height:1.1px;background:#a0a0a0"></div>
<span class="t" style="left:478.8px;top:149.74px;font-size:10px;line-height:10px;transform:scaleX(.905);color:#b9b9b9;">image_scn_type_copy</span>
<div style="left:462px;top:159.07500000000002px;width:8.8px;height:8.4px;background:#fff;border:1px solid #202020"></div>
<svg style="left:462px;top:157.28px" width="11" height="11" viewBox="0 0 11 11"><path d="M1.5 5.5 L4 9 L9.5 1.5" fill="none" stroke="#e01818" stroke-width="1.7"/></svg>
<div style="left:472.3px;top:163.275px;width:5.2px;height:1.1px;background:#606060"></div>
<span class="t" style="left:478.8px;top:159.11px;font-size:10px;line-height:10px;transform:scaleX(.905);color:#000;text-shadow:0 0 .4px #000;">image_scn_cnt_code</span>
<div style="left:462px;top:168.45000000000002px;width:8.8px;height:8.4px;background:#fff;border:1px solid #202020"></div>
<div style="left:472.3px;top:172.65px;width:5.2px;height:1.1px;background:#606060"></div>
<span class="t" style="left:478.8px;top:168.49px;font-size:10px;line-height:10px;transform:scaleX(.905);color:#4a4a4a;">image_scn_cnt_initialized_data</span>
<div style="left:462px;top:177.82500000000002px;width:8.8px;height:8.4px;background:#fff;border:1px solid #202020"></div>
<div style="left:472.3px;top:182.025px;width:5.2px;height:1.1px;background:#606060"></div>
<span class="t" style="left:478.8px;top:177.86px;font-size:10px;line-height:10px;transform:scaleX(.905);color:#4a4a4a;">image_scn_cnt_uninitialized_data</span>
<div style="left:462px;top:187.20000000000002px;width:8.8px;height:8.4px;background:#c2c2c2;border:1px solid #8e8e8e;border-radius:1px"></div>
<div style="left:472.3px;top:191.4px;width:5.2px;height:1.1px;background:#a0a0a0"></div>
<span class="t" style="left:478.8px;top:187.24px;font-size:10px;line-height:10px;transform:scaleX(.905);color:#b9b9b9;">image_scn_lnk_other</span>
<div style="left:462px;top:196.57500000000002px;width:8.8px;height:8.4px;background:#c2c2c2;border:1px solid #8e8e8e;border-radius:1px"></div>
<div style="left:472.3px;top:200.775px;width:5.2px;height:1.1px;background:#a0a0a0"></div>
<span class="t" style="left:478.8px;top:196.61px;font-size:10px;line-height:10px;transform:scaleX(.905);color:#b9b9b9;">image_scn_lnk_info</span>
<div style="left:462px;top:205.95000000000002px;width:8.8px;height:8.4px;background:#c2c2c2;border:1px solid #8e8e8e;border-radius:1px"></div>
<div style="left:472.3px;top:210.15px;width:5.2px;height:1.1px;background:#a0a0a0"></div>
<span class="t" style="left:478.8px;top:205.99px;font-size:10px;line-height:10px;transform:scaleX(.905);color:#b9b9b9;">image_scn_type_over</span>
<div style="left:462px;top:215.32500000000002px;width:8.8px;height:8.4px;background:#c2c2c2;border:1px solid #8e8e8e;border-radius:1px"></div>
<div style="left:472.3px;top:219.525px;width:5.2px;height:1.1px;background:#a0a0a0"></div>
<span class="t" style="left:478.8px;top:215.36px;font-size:10px;line-height:10px;transform:scaleX(.905);color:#b9b9b9;">image_scn_lnk_remove</span>
<div style="left:462px;top:224.70000000000002px;width:8.8px;height:8.4px;background:#c2c2c2;border:1px solid #8e8e8e;border-radius:1px"></div>
<div style="left:472.3px;top:228.9px;width:5.2px;height:1.1px;background:#a0a0a0"></div>
<span class="t" style="left:478.8px;top:224.74px;font-size:10px;line-height:10px;transform:scaleX(.905);color:#b9b9b9;">image_scn_lnk_comdat</span>
<div style="left:462px;top:234.07500000000002px;width:8.8px;height:8.4px;background:#c2c2c2;border:1px solid #8e8e8e;border-radius:1px"></div>
<div style="left:472.3px;top:238.275px;width:5.2px;height:1.1px;background:#a0a0a0"></div>
<span class="t" style="left:478.8px;top:234.11px;font-size:10px;line-height:10px;transform:scaleX(.905);color:#b9b9b9;">bit 13</span>
<div style="left:462px;top:243.45000000000002px;width:8.8px;height:8.4px;background:#c2c2c2;border:1px solid #8e8e8e;border-radius:1px"></div>
<div style="left:472.3px;top:247.65px;width:5.2px;height:1.1px;background:#a0a0a0"></div>
<span class="t" style="left:478.8px;top:243.49px;font-size:10px;line-height:10px;transform:scaleX(.905);color:#b9b9b9;">bit 14</span>
<div style="left:462px;top:252.825px;width:8.8px;height:8.4px;background:#c2c2c2;border:1px solid #8e8e8e;border-radius:1px"></div>
<div style="left:472.3px;top:257.025px;width:5.2px;height:1.1px;background:#a0a0a0"></div>
<span class="t" style="left:478.8px;top:252.86px;font-size:10px;line-height:10px;transform:scaleX(.905);color:#b9b9b9;">image_scn_mem_fardata</span>
<div style="left:462px;top:262.2px;width:8.8px;height:8.4px;background:#c2c2c2;border:1px solid #8e8e8e;border-radius:1px"></div>
<div style="left:472.3px;top:266.4px;width:5.2px;height:1.1px;background:#a0a0a0"></div>
<span class="t" style="left:478.8px;top:262.24px;font-size:10px;line-height:10px;transform:scaleX(.905);color:#b9b9b9;">bit 16</span>
<div style="left:462px;top:271.575px;width:8.8px;height:8.4px;background:#c2c2c2;border:1px solid #8e8e8e;border-radius:1px"></div>
<div style="left:472.3px;top:275.775px;width:5.2px;height:1.1px;background:#a0a0a0"></div>
<span class="t" style="left:478.8px;top:271.61px;font-size:10px;line-height:10px;transform:scaleX(.905);color:#b9b9b9;">image_scn_mem_purgeable</span>
<div style="left:462px;top:280.95px;width:8.8px;height:8.4px;background:#c2c2c2;border:1px solid #8e8e8e;border-radius:1px"></div>
<div style="left:472.3px;top:285.15px;width:5.2px;height:1.1px;background:#a0a0a0"></div>
<span class="t" style="left:478.8px;top:280.99px;font-size:10px;line-height:10px;transform:scaleX(.905);color:#b9b9b9;">image_scn_mem_locked</span>
<div style="left:462px;top:290.325px;width:8.8px;height:8.4px;background:#c2c2c2;border:1px solid #8e8e8e;border-radius:1px"></div>
<div style="left:472.3px;top:294.525px;width:5.2px;height:1.1px;background:#a0a0a0"></div>
<span class="t" style="left:478.8px;top:290.36px;font-size:10px;line-height:10px;transform:scaleX(.905);color:#b9b9b9;">image_scn_mem_preload</span>
<div style="left:462px;top:299.7px;width:8.8px;height:8.4px;background:#c2c2c2;border:1px solid #8e8e8e;border-radius:1px"></div>
<div style="left:472.3px;top:303.9px;width:5.2px;height:1.1px;background:#a0a0a0"></div>
<span class="t" style="left:478.8px;top:299.74px;font-size:10px;line-height:10px;transform:scaleX(.905);color:#b9b9b9;">align group</span>
<div style="left:462px;top:309.075px;width:8.8px;height:8.4px;background:#c2c2c2;border:1px solid #8e8e8e;border-radius:1px"></div>
<div style="left:472.3px;top:313.275px;width:5.2px;height:1.1px;background:#a0a0a0"></div>
<span class="t" style="left:478.8px;top:309.11px;font-size:10px;line-height:10px;transform:scaleX(.905);color:#b9b9b9;">align group</span>
<div style="left:462px;top:318.45px;width:8.8px;height:8.4px;background:#c2c2c2;border:1px solid #8e8e8e;border-radius:1px"></div>
<div style="left:472.3px;top:322.65px;width:5.2px;height:1.1px;background:#a0a0a0"></div>
<span class="t" style="left:478.8px;top:318.49px;font-size:10px;line-height:10px;transform:scaleX(.905);color:#b9b9b9;">align group</span>
<div style="left:462px;top:327.825px;width:8.8px;height:8.4px;background:#c2c2c2;border:1px solid #8e8e8e;border-radius:1px"></div>
<div style="left:472.3px;top:332.025px;width:5.2px;height:1.1px;background:#a0a0a0"></div>
<span class="t" style="left:478.8px;top:327.86px;font-size:10px;line-height:10px;transform:scaleX(.905);color:#b9b9b9;">align group</span>
<div style="left:462px;top:337.2px;width:8.8px;height:8.4px;background:#c2c2c2;border:1px solid #8e8e8e;border-radius:1px"></div>
<div style="left:472.3px;top:341.4px;width:5.2px;height:1.1px;background:#a0a0a0"></div>
<span class="t" style="left:478.8px;top:337.24px;font-size:10px;line-height:10px;transform:scaleX(.905);color:#b9b9b9;">image_scn_lnk_nreloc_ovfl</span>
<div style="left:462px;top:346.575px;width:8.8px;height:8.4px;background:#fff;border:1px solid #202020"></div>
<div style="left:472.3px;top:350.775px;width:5.2px;height:1.1px;background:#606060"></div>
<span class="t" style="left:478.8px;top:346.61px;font-size:10px;line-height:10px;transform:scaleX(.905);color:#4a4a4a;">image_scn_mem_discardable</span>
<div style="left:462px;top:355.95px;width:8.8px;height:8.4px;background:#fff;border:1px solid #202020"></div>
<div style="left:472.3px;top:360.15px;width:5.2px;height:1.1px;background:#606060"></div>
<span class="t" style="left:478.8px;top:355.99px;font-size:10px;line-height:10px;transform:scaleX(.905);color:#8a8a92;">image_scn_mem_not_cached</span>
<div style="left:462px;top:365.325px;width:8.8px;height:8.4px;background:#fff;border:1px solid #202020"></div>
<div style="left:472.3px;top:369.525px;width:5.2px;height:1.1px;background:#606060"></div>
<span class="t" style="left:478.8px;top:365.36px;font-size:10px;line-height:10px;transform:scaleX(.905);color:#8a8a92;">image_scn_mem_not_paged</span>
<div style="left:462px;top:374.7px;width:8.8px;height:8.4px;background:#fff;border:1px solid #202020"></div>
<div style="left:472.3px;top:378.9px;width:5.2px;height:1.1px;background:#606060"></div>
<span class="t" style="left:478.8px;top:374.74px;font-size:10px;line-height:10px;transform:scaleX(.905);color:#8a8a92;">image_scn_mem_shared</span>
<div style="left:462px;top:384.075px;width:8.8px;height:8.4px;background:#fff;border:1px solid #202020"></div>
<svg style="left:462px;top:382.27px" width="11" height="11" viewBox="0 0 11 11"><path d="M1.5 5.5 L4 9 L9.5 1.5" fill="none" stroke="#e01818" stroke-width="1.7"/></svg>
<div style="left:472.3px;top:388.275px;width:5.2px;height:1.1px;background:#606060"></div>
<span class="t" style="left:478.8px;top:384.11px;font-size:10px;line-height:10px;transform:scaleX(.905);color:#000;text-shadow:0 0 .4px #000;">image_scn_mem_execute</span>
<div style="left:462px;top:393.45px;width:8.8px;height:8.4px;background:#fff;border:1px solid #202020"></div>
<svg style="left:462px;top:391.65px" width="11" height="11" viewBox="0 0 11 11"><path d="M1.5 5.5 L4 9 L9.5 1.5" fill="none" stroke="#e01818" stroke-width="1.7"/></svg>
<div style="left:472.3px;top:397.65px;width:5.2px;height:1.1px;background:#606060"></div>
<span class="t" style="left:478.8px;top:393.49px;font-size:10px;line-height:10px;transform:scaleX(.905);color:#000;text-shadow:0 0 .4px #000;">image_scn_mem_read</span>
<div style="left:462px;top:402.825px;width:8.8px;height:8.4px;background:#fff;border:1px solid #202020"></div>
<div style="left:472.3px;top:407.025px;width:5.2px;height:1.1px;background:#606060"></div>
<span class="t" style="left:478.8px;top:402.86px;font-size:10px;line-height:10px;transform:scaleX(.905);color:#8a8a92;">image_scn_mem_write</span>
<div class="btn" style="left:496px;top:427px;width:62.5px;height:19.5px"></div>
<span class="t" style="left:521.60px;top:431.29px;font-family:'Liberation Sans';font-size:11px;line-height:11px;font-weight:400;color:#101010;transform:scaleX(0.7481);">OK</span>
<div class="btn" style="left:563px;top:427px;width:61.5px;height:19.5px"></div>
<span class="t" style="left:579.00px;top:431.29px;font-family:'Liberation Sans';font-size:11px;line-height:11px;font-weight:400;color:#101010;transform:scaleX(0.8467);">Cancel</span>
<div style="left:146px;top:250px;width:290px;height:177px;border-radius:4px;box-shadow:6px 6px 6px 0 rgba(0,0,0,.66), 2px 2px 3px rgba(0,0,0,.5)"></div>
<div style="left:145.5px;top:249.5px;width:290px;height:177.3px;border-radius:2px 2px 1px 1px;background:#8fa8d8"></div>
<div style="left:146px;top:250px;width:289.2px;height:176.4px;border-radius:1px;background:linear-gradient(to right,#dbe6f8 0%,#b9cdf1 8%,#8aabe5 30%,#6e95da 55%,#668ed8 75%,#769cde 93%,#8898e0 100%)"></div>
<div style="left:146px;top:250px;width:289.2px;height:20px;background:linear-gradient(rgba(255,255,255,.5),rgba(255,255,255,.0) 35%,rgba(255,255,255,.08))"></div>
<div style="left:432.2px;top:268px;width:2px;height:154px;background:linear-gradient(#8c9ae2,#4a68da 40%,#3454d6)"></div>
<div style="left:434px;top:251px;width:1.3px;height:175.5px;background:#34ccf2"></div>
<div style="left:147px;top:421px;width:288px;height:5.4px;background:linear-gradient(#dfe9f8,#5fcaf2 55%,#2fbdf0)"></div>
<div style="left:431.2px;top:269px;width:1px;height:153px;background:#f4f8ff"></div>
<div style="left:150px;top:421.3px;width:282px;height:1px;background:#f4f8ff"></div>
<div style="left:150.5px;top:268.5px;width:281px;height:153px;background:#f0f0f0;border:1px solid #3c3c3c"></div>
<div style="left:151.5px;top:269.5px;width:279px;height:151px;border:1px solid #fff;border-left:none;border-top:none"></div>
<span class="t" style="left:162.00px;top:251.74px;font-family:'Liberation Sans';font-size:12px;line-height:12px;font-weight:400;color:#181818;transform:scaleX(0.8440);text-shadow:0 0 4px #fff,0 0 5px #fff;">&lt;Size of Raw Data&gt; Calculator</span>
<div style="left:416.5px;top:253.5px;width:13.8px;height:13px;border-radius:3px;background:#e6ae9e;border:1px solid #a07c88"></div>
<svg style="left:417px;top:254px" width="13" height="12" viewBox="0 0 13 12"><path d="M2 5.5 V10 M11.3 5.5 V10" stroke="#ee2414" stroke-width="2"/><path d="M4.4 3.8 L8.6 9.2 M8.6 3.8 L4.4 9.2" stroke="#8a6e78" stroke-width="3"/><path d="M4.4 3.8 L8.6 9.2 M8.6 3.8 L4.4 9.2" stroke="#fff" stroke-width="1.7"/></svg>
<span class="t" style="left:161.40px;top:280.69px;font-family:'Liberation Sans';font-size:11px;line-height:11px;font-weight:400;color:#1a1a1a;transform:scaleX(0.7818);">FileAlignment</span>
<div class="fld" style="left:231px;top:277px;width:70.5px;height:16.5px"></div>
<span class="t" style="left:232.50px;top:280.19px;font-family:'Liberation Sans';font-size:11px;line-height:11px;font-weight:400;color:#9a9a9a;transform:scaleX(0.8375);">00000200</span>
<span class="t" style="left:161.40px;top:301.69px;font-family:'Liberation Sans';font-size:11px;line-height:11px;font-weight:400;color:#1a1a1a;transform:scaleX(0.8254);">SizeOfRawData</span>
<div class="fld" style="left:231px;top:298px;width:70.5px;height:16px"></div>
<span class="t" style="left:232.00px;top:300.49px;font-family:'Liberation Sans';font-size:11px;line-height:11px;font-weight:400;color:#101010;transform:scaleX(0.8272);">0005A000</span>
<div style="left:303px;top:298px;width:10.5px;height:8px;background:#f4f4f4;border:1px solid #c0c4c8;border-radius:2px 2px 0 0"></div>
<div style="left:303px;top:306px;width:10.5px;height:8px;background:#f4f4f4;border:1px solid #c0c4c8;border-radius:0 0 2px 2px"></div>
<svg style="left:306px;top:300.5px" width="5" height="3.2" viewBox="0 0 6 4"><path d="M0 4 L3 0.5 L6 4 Z" fill="#3c5ab0"/></svg>
<svg style="left:306px;top:308.6px" width="5" height="3.2" viewBox="0 0 6 4"><path d="M0 0 L3 3.5 L6 0 Z" fill="#3c5ab0"/></svg>
<div style="left:151.5px;top:326px;width:279px;height:1px;background:#a0a0a0"></div>
<div style="left:151.5px;top:327px;width:279px;height:1px;background:#fff"></div>
<span class="t" style="left:161.40px;top:331.99px;font-family:'Liberation Sans';font-size:11px;line-height:11px;font-weight:400;color:#1a1a1a;transform:scaleX(0.8284);">New SizeOfRawData</span>
<span class="t" style="left:265.00px;top:331.99px;font-family:'Liberation Sans';font-size:11px;line-height:11px;font-weight:400;color:#1a1a1a;transform:scaleX(0.8233);">Value</span>
<span class="t" style="left:288.00px;top:332.88px;font-family:'Liberation Sans';font-size:9px;line-height:9px;font-weight:700;color:#e02010;transform:scaleX(0.8533);">*</span>
<span class="t" style="left:340.00px;top:331.99px;font-family:'Liberation Sans';font-size:11px;line-height:11px;font-weight:400;color:#1a1a1a;transform:scaleX(0.8461);">PointerToRawData</span>
<div class="fld" style="left:161px;top:345.5px;width:88px;height:16.5px"></div>
<span class="t" style="left:163.40px;top:347.34px;font-family:'Liberation Sans';font-size:12px;line-height:12px;font-weight:700;color:#1818ee;transform:scaleX(0.8557);">0005A000</span>
<span class="t" style="left:253.50px;top:348.69px;font-family:'Liberation Sans';font-size:11px;line-height:11px;font-weight:400;color:#1a1a1a;transform:scaleX(0.9320);">=</span>
<div class="fld" style="left:265px;top:345.5px;width:61.5px;height:16.5px"></div>
<span class="t" style="left:267.00px;top:348.69px;font-family:'Liberation Sans';font-size:11px;line-height:11px;font-weight:400;color:#101010;transform:scaleX(0.8272);">0005A400</span>
<span class="t" style="left:332.00px;top:348.69px;font-family:'Liberation Sans';font-size:11px;line-height:11px;font-weight:400;color:#1a1a1a;transform:scaleX(0.9532);">-</span>
<div class="fld" style="left:339.5px;top:345.5px;width:81.5px;height:16.5px"></div>
<span class="t" style="left:342.00px;top:348.69px;font-family:'Liberation Sans';font-size:11px;line-height:11px;font-weight:400;color:#9a9a9a;transform:scaleX(0.8375);">00000400</span>
<span class="t" style="left:161.60px;top:368.88px;font-family:'Liberation Sans';font-size:9px;line-height:9px;font-weight:700;color:#e02010;transform:scaleX(0.9102);">*</span>
<span class="t" style="left:168.00px;top:368.69px;font-family:'Liberation Sans';font-size:11px;line-height:11px;font-weight:400;color:#1a1a1a;transform:scaleX(0.8335);">Value: Next pointer to Raw Data</span>
<div style="left:151.5px;top:385px;width:279px;height:1px;background:#a0a0a0"></div>
<div style="left:151.5px;top:386px;width:279px;height:1px;background:#fff"></div>
<div class="btn" style="left:278px;top:394px;width:62px;height:19.5px;border-color:#3c7fb1;box-shadow:inset 0 0 0 1px #48d0f6"></div>
<span class="t" style="left:302.50px;top:398.69px;font-family:'Liberation Sans';font-size:11px;line-height:11px;font-weight:400;color:#101010;transform:scaleX(0.7544);">OK</span>
<div class="btn" style="left:346px;top:394px;width:62px;height:19.5px"></div>
<span class="t" style="left:362.00px;top:398.69px;font-family:'Liberation Sans';font-size:11px;line-height:11px;font-weight:400;color:#101010;transform:scaleX(0.8467);">Cancel</span>
</body></html>
